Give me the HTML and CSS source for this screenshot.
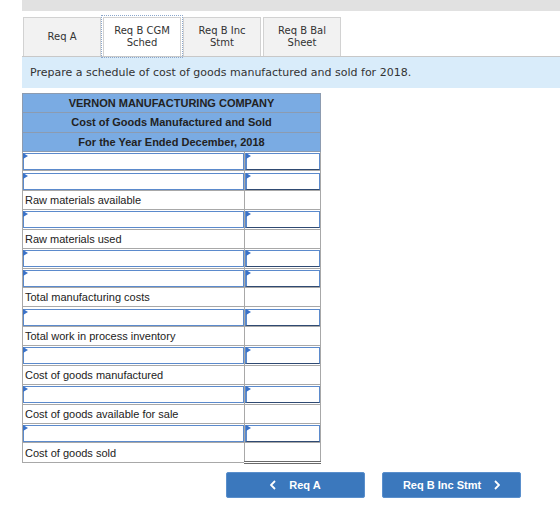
FILE: index.html
```html
<!DOCTYPE html>
<html lang="en">
<head>
    <meta charset="UTF-8">
    <title>Req B CGM Sched</title>
    <link rel="stylesheet" href="styles.css">
</head>
<body>
    <div class="page">
        <div class="top-bar"></div>

        <!-- tabs -->
        <div class="tabs">
            <div class="tab">Req A</div>
            <div class="tab tab-active">Req B CGM<br>Sched</div>
            <div class="tab">Req B Inc<br>Stmt</div>
            <div class="tab">Req B Bal<br>Sheet</div>
        </div>

        <div class="prompt">Prepare a schedule of cost of goods manufactured and sold for 2018.</div>

        <table class="sched">
            <colgroup>
                <col class="col-label">
                <col class="col-amt">
            </colgroup>
            <tr class="head"><td colspan="2">VERNON MANUFACTURING COMPANY</td></tr>
            <tr class="head"><td colspan="2">Cost of Goods Manufactured and Sold</td></tr>
            <tr class="head"><td colspan="2">For the Year Ended December, 2018</td></tr>

            <tr><td class="in"><div class="box"></div></td><td class="in amt"><div class="box"></div></td></tr>
            <tr><td class="in"><div class="box"></div></td><td class="in amt"><div class="box"></div></td></tr>
            <tr><td class="label">Raw materials available</td><td class="amt"></td></tr>
            <tr><td class="in"><div class="box"></div></td><td class="in amt"><div class="box"></div></td></tr>
            <tr><td class="label">Raw materials used</td><td class="amt"></td></tr>
            <tr><td class="in"><div class="box"></div></td><td class="in amt"><div class="box"></div></td></tr>
            <tr><td class="in"><div class="box"></div></td><td class="in amt"><div class="box"></div></td></tr>
            <tr><td class="label">Total manufacturing costs</td><td class="amt"></td></tr>
            <tr><td class="in"><div class="box"></div></td><td class="in amt"><div class="box"></div></td></tr>
            <tr><td class="label">Total work in process inventory</td><td class="amt"></td></tr>
            <tr><td class="in"><div class="box"></div></td><td class="in amt"><div class="box"></div></td></tr>
            <tr><td class="label">Cost of goods manufactured</td><td class="amt"></td></tr>
            <tr><td class="in"><div class="box"></div></td><td class="in amt"><div class="box"></div></td></tr>
            <tr><td class="label">Cost of goods available for sale</td><td class="amt"></td></tr>
            <tr><td class="in"><div class="box"></div></td><td class="in amt"><div class="box"></div></td></tr>
            <tr><td class="label">Cost of goods sold</td><td class="amt total"></td></tr>
        </table>

        <div class="nav">
            <a class="nav-btn" href="#">
                <svg class="chev" width="6" height="10" viewBox="0 0 6 10"><path d="M5 1 1 5l4 4" fill="none" stroke="#fff" stroke-width="1.8"/></svg>
                Req A
            </a>
            <a class="nav-btn" href="#">
                Req B Inc Stmt
                <svg class="chev" width="6" height="10" viewBox="0 0 6 10"><path d="M1 1l4 4-4 4" fill="none" stroke="#fff" stroke-width="1.8"/></svg>
            </a>
        </div>
    </div>
</body>
</html>
```

FILE: styles.css
```css
* {
    margin: 0;
    padding: 0;
    box-sizing: border-box;
}

body {
    background: #fff;
    font-family: "Liberation Sans", Arial, sans-serif;
    color: #222;
}

.page {
    padding-left: 22px;
}

/* top grey strip */
.top-bar {
    height: 11px;
    background: #e1e1e1;
}

/* tabs */
.tabs {
    display: flex;
    gap: 2px;
    margin-top: 6px;
    padding-left: 1px;
}

.tab {
    width: 78px;
    height: 39px;
    display: flex;
    align-items: center;
    justify-content: center;
    text-align: center;
    font-family: "DejaVu Sans", Verdana, sans-serif;
    font-size: 10px;
    line-height: 12px;
    color: #333;
    background: #f2f2f2;
    border: 1px solid #d2d2d2;
    border-bottom: none;
}

.tab-active {
    background: #fff;
    outline: 1px dotted #8aa6cc;
    outline-offset: 1px;
}

/* instruction band */
.prompt {
    height: 32px;
    line-height: 32px;
    padding-left: 8px;
    background: #d9ecfa;
    border-top: 1px solid #c8c8c8;
    font-family: "DejaVu Sans", Verdana, sans-serif;
    font-size: 11px;
    color: #333;
}

/* schedule table */
.sched {
    margin-top: 5px;
    width: 299px;
    border-collapse: collapse;
    table-layout: fixed;
    font-size: 11px;
}

.col-amt {
    width: 76px;
}

.sched td {
    height: 19.45px;
    border: 1px solid #a8a8a8;
    padding: 0;
    vertical-align: middle;
    white-space: nowrap;
}

.sched .head td {
    height: 19.3px;
    background: #7aabe3;
    border-color: #8c9bb0;
    text-align: center;
    font-weight: bold;
    color: #222;
}

.sched .label {
    padding-left: 2px;
    color: #222;
}

.sched .in {
    padding: 1px 0 0;
}

.box {
    position: relative;
    height: 17px;
    border: 1px solid #5b8acc;
    background: #fff;
}

.amt .box {
    border-bottom-color: #2f4a72;
    border-left-width: 2px;
}

/* little marker in the input corner */
.box::before {
    content: "";
    position: absolute;
    top: -1px;
    left: -1px;
    border-top: 3px solid transparent;
    border-bottom: 3px solid transparent;
    border-left: 5px solid #3a72c8;
}

.sched .total {
    border-bottom: 3px double #6a6a6a;
}

/* bottom buttons */
.nav {
    display: flex;
    gap: 17px;
    margin-top: 8px;
    padding-left: 204px;
}

.nav-btn {
    width: 139px;
    height: 26px;
    display: flex;
    align-items: center;
    justify-content: center;
    gap: 13px;
    background: #3b78bd;
    border: 1px solid #5a8fcc;
    border-radius: 2px;
    color: #fff;
    font-weight: bold;
    font-size: 11px;
    text-decoration: none;
}

.chev {
    display: block;
}
```
